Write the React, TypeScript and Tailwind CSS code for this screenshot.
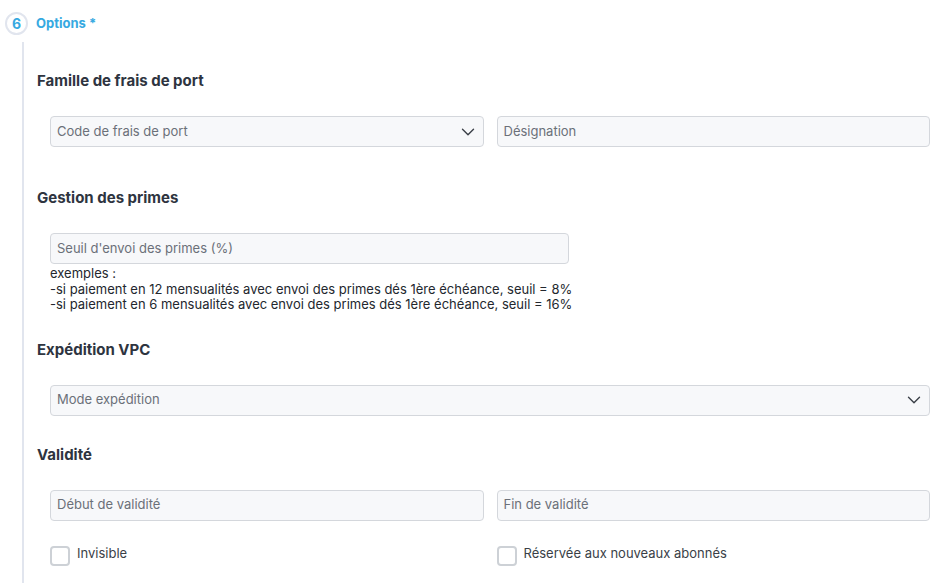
import { ChevronDown } from 'lucide-react';

function Field({ placeholder, select, className = '' }: { placeholder: string; select?: boolean; className?: string }) {
  return (
    <div
      className={`h-[31px] flex items-center justify-between rounded-[4px] border border-[#d4d7dc] bg-[#f7f8fa] pl-[6px] pr-[4px] ${className}`}
    >
      <span className="text-[13px] text-[#6b7079]">{placeholder}</span>
      {select && <ChevronDown className="w-[22px] h-[22px] text-[#3a3f47]" strokeWidth={1.5} />}
    </div>
  );
}

function Heading({ children, className = '' }: { children: string; className?: string }) {
  return <h2 className={`pl-[13px] text-[15px] leading-[20px] font-bold text-[#2e3440] ${className}`}>{children}</h2>;
}

function Check({ label }: { label: string }) {
  return (
    <label className="flex items-start gap-[7px] flex-1">
      <span className="w-[20px] h-[20px] rounded-[4px] border-2 border-[#cdd1d6] bg-white" />
      <span className="mt-[-1px] text-[13px] leading-[16px] text-[#3a3f47]">{label}</span>
    </label>
  );
}

export default function App() {
  return (
    <div className="min-h-screen bg-white pt-[12px]" style={{ fontFamily: 'Inter, "Noto Sans", sans-serif' }}>
      <div className="flex items-center pl-[5px]">
        <div className="w-[23px] h-[23px] rounded-full border-2 border-[#e1e5ee] flex items-center justify-center text-[14px] font-bold text-[#36a9e1]">
          6
        </div>
        <span className="ml-[8px] text-[13px] font-bold text-[#36a9e1]">Options *</span>
      </div>

      <div className="ml-[22px] mt-[7px] border-l-2 border-[#e1e5ee] pt-[29px] pb-[20px] pr-[19px]">
        <Heading>Famille de frais de port</Heading>
        <div className="flex gap-[13px] pl-[26px] mt-[25px]">
          <Field placeholder="Code de frais de port" select className="flex-1" />
          <Field placeholder="Désignation" className="flex-1" />
        </div>

        <Heading className="mt-[41px]">Gestion des primes</Heading>
        <div className="pl-[26px] mt-[25px]">
          <Field placeholder="Seuil d'envoi des primes (%)" className="w-[519px]" />
          <div className="mt-[2px] text-[13px] leading-[15.5px] text-[#23272e]">
            <p>exemples :</p>
            <p>-si paiement en 12 mensualités avec envoi des primes dés 1ère échéance, seuil = 8%</p>
            <p>-si paiement en 6 mensualités avec envoi des primes dés 1ère échéance, seuil = 16%</p>
          </div>
        </div>

        <Heading className="mt-[27px]">Expédition VPC</Heading>
        <div className="pl-[26px] mt-[25px]">
          <Field placeholder="Mode expédition" select />
        </div>

        <Heading className="mt-[29px]">Validité</Heading>
        <div className="flex gap-[13px] pl-[26px] mt-[25px]">
          <Field placeholder="Début de validité" className="flex-1" />
          <Field placeholder="Fin de validité" className="flex-1" />
        </div>

        <div className="flex gap-[13px] pl-[26px] mt-[25px]">
          <Check label="Invisible" />
          <Check label="Réservée aux nouveaux abonnés" />
        </div>
      </div>
    </div>
  );
}
